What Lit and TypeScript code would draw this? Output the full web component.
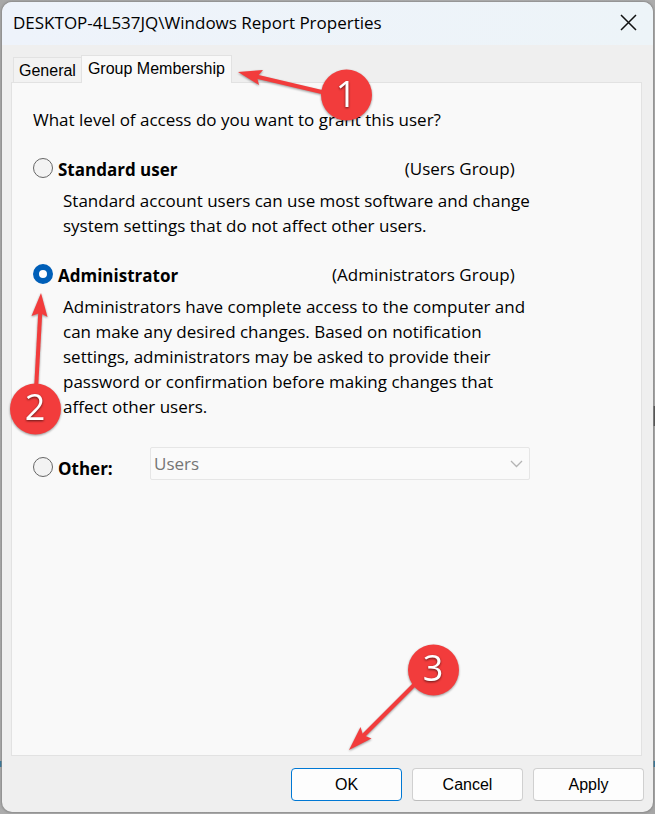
import { LitElement, html, css } from "lit";
import { customElement, state } from "lit/decorators.js";

@customElement("app-root")
class AppRoot extends LitElement {
  @state() private level = "administrator";

  static styles = css`
    :host {
      display: flex;
      box-sizing: border-box;
      min-height: 100vh;
      padding: 2px;
      background:
        linear-gradient(#1f6f9a, #1f6f9a) 0 761px / 100% 6px no-repeat,
        linear-gradient(#444, #444) 100% 406px / 2px 20px no-repeat,
        linear-gradient(100deg, #a8a8a8, #b4b4b4 60%, #a6a6a6);
      font-family: "Open Sans", "Noto Sans", sans-serif;
      font-size: 17px;
      line-height: 25px;
      color: #000;
    }
    .dialog {
      position: relative;
      flex: 1;
      display: flex;
      flex-direction: column;
      background: #efefef;
      border-radius: 10px;
      box-shadow: 0 0 2px 1px #8c8c8c;
    }
    .titlebar {
      display: flex;
      align-items: center;
      justify-content: space-between;
      height: 43px;
      padding: 0 16px 2px 11px;
      box-sizing: border-box;
      background: linear-gradient(90deg, #eef3fb, #edf4f8);
      border-radius: 10px 10px 0 0;
    }
    .title {
      margin: 0;
      font-size: 17px;
      font-weight: 400;
      white-space: nowrap;
    }
    .close {
      display: flex;
      padding: 0;
      border: 0;
      background: none;
    }
    .tabs {
      display: flex;
      align-items: flex-end;
      padding: 10px 11px 0;
    }
    .tab {
      box-sizing: border-box;
      height: 25px;
      padding: 0 5px;
      border: 1px solid #e2e2e2;
      border-bottom: 0;
      background: #f2f2f2;
      font: 16px/26px "Liberation Sans", Arial, sans-serif;
      color: #000;
    }
    .tab.active {
      position: relative;
      height: 28px;
      margin: 0 0 -1px -1px;
      padding: 0 6px 2px;
      background: #f9f9f9;
    }
    .panel {
      flex: 1;
      margin: 0 11px 0 9px;
      padding: 24px 21px;
      border: 1px solid #e2e2e2;
      background: #f9f9f9;
    }
    .options {
      width: min(100%, 493px);
      margin: 0;
      padding: 0;
      border: 0;
    }
    .question {
      padding: 0;
      margin-bottom: 24px;
      white-space: nowrap;
    }
    .option {
      margin-bottom: 24px;
    }
    .row {
      display: flex;
      align-items: center;
      padding-right: 15px;
    }
    .radio {
      appearance: none;
      flex: none;
      box-sizing: border-box;
      width: 20px;
      height: 20px;
      margin: 0 5px 2px 0;
      border: 1px solid #666;
      border-radius: 50%;
      background: #f3f3f3;
    }
    .radio:checked {
      border: 6px solid #005fb8;
      background: #fff;
    }
    .name {
      font-weight: 700;
      padding-top: 2px;
      line-height: 23px;
    }
    .group {
      margin-left: auto;
    }
    .description {
      margin: 7px 0 0 30px;
    }
    .line {
      display: block;
      white-space: nowrap;
    }
    .other {
      display: grid;
      grid-template-columns: 117px 1fr;
      align-items: center;
      margin-top: 28px;
    }
    .other .row {
      padding: 8px 0 0;
    }
    .picker {
      display: grid;
      align-items: center;
    }
    .select,
    .chevron {
      grid-area: 1 / 1;
    }
    .select {
      appearance: none;
      width: 100%;
      height: 33px;
      padding: 0 3px;
      border: 1px solid #e6e6e6;
      border-radius: 2px;
      background: #fafafa;
      font: inherit;
      color: #757575;
      opacity: 1;
    }
    .chevron {
      justify-self: end;
      margin-right: 7px;
      pointer-events: none;
    }
    .actions {
      display: flex;
      justify-content: flex-end;
      gap: 10px;
      padding: 12px 9px 11px;
    }
    .button {
      box-sizing: border-box;
      width: 111px;
      height: 33px;
      padding: 0;
      border: 1px solid #d0d0d0;
      border-bottom-color: #bcbcbc;
      border-radius: 4px;
      background: #fdfdfd;
      font: 16px/24px "Liberation Sans", Arial, sans-serif;
      color: #000;
    }
    .button.primary {
      border-color: #0078d4;
    }
    .callout {
      position: absolute;
      pointer-events: none;
      filter: drop-shadow(0 1px 1px rgba(0, 0, 0, 0.4));
      fill: #f23c3c;
    }
    .shaft {
      stroke: #f23c3c;
      stroke-width: 4;
    }
    .digit {
      font: 500 36px "Open Sans", sans-serif;
      text-anchor: middle;
      fill: #fff;
      filter: drop-shadow(0 1px 1px rgba(0, 0, 0, 0.6));
    }
    .first {
      left: 234px;
      top: 64px;
    }
    .second {
      left: 6px;
      top: 288px;
    }
    .third {
      right: 190px;
      bottom: 58px;
    }
  `;

  private radio(id: string) {
    return html`<input
      class="radio"
      type="radio"
      name="level"
      id=${id}
      .checked=${this.level === id}
      @change=${() => (this.level = id)}
    />`;
  }

  private option(id: string, name: string, group: string, lines: string[]) {
    return html`<div class="option">
      <div class="row">
        ${this.radio(id)}
        <label class="name" for=${id}>${name}</label>
        <span class="group">${group}</span>
      </div>
      <p class="description">
        ${lines.map((line) => html`<span class="line">${line} </span>`)}
      </p>
    </div>`;
  }

  render() {
    return html`<main class="dialog">
      <header class="titlebar">
        <h1 class="title">DESKTOP-4L537JQ\\Windows Report Properties</h1>
        <button class="close" aria-label="Close">
          <svg width="17" height="17" viewBox="0 0 17 17">
            <path d="M1 1L16 16M16 1L1 16" stroke="#111" stroke-width="1.5" />
          </svg>
        </button>
      </header>
      <div class="tabs" role="tablist">
        <button class="tab" role="tab" aria-selected="false">General</button>
        <button class="tab active" role="tab" aria-selected="true">Group Membership</button>
      </div>
      <section class="panel" role="tabpanel">
        <fieldset class="options">
          <legend class="question">What level of access do you want to grant this user?</legend>
          ${this.option("standard", "Standard user", "(Users Group)", [
            "Standard account users can use most software and change",
            "system settings that do not affect other users.",
          ])}
          ${this.option("administrator", "Administrator", "(Administrators Group)", [
            "Administrators have complete access to the computer and",
            "can make any desired changes. Based on notification",
            "settings, administrators may be asked to provide their",
            "password or confirmation before making changes that",
            "affect other users.",
          ])}
          <div class="other">
            <div class="row">
              ${this.radio("other")}
              <label class="name" for="other">Other:</label>
            </div>
            <div class="picker">
              <select class="select" aria-label="Other group" ?disabled=${this.level !== "other"}>
                <option>Users</option>
              </select>
              <svg class="chevron" width="13" height="8" viewBox="0 0 13 8">
                <path d="M1 1L6.5 6.5L12 1" fill="none" stroke="#b4b4b4" stroke-width="1.3" />
              </svg>
            </div>
          </div>
        </fieldset>
      </section>
      <footer class="actions">
        <button class="button primary">OK</button>
        <button class="button">Cancel</button>
        <button class="button">Apply</button>
      </footer>

      <svg class="callout first" width="140" height="60" viewBox="0 0 140 60">
        <path class="shaft" d="M18 10L90 27" />
        <path d="M2 6L27 4L21 11L23 19Z" />
        <circle cx="110.500" cy="29" r="25.500" />
        <text class="digit" x="110" y="41">1</text>
      </svg>
      <svg class="callout second" width="60" height="148" viewBox="0 0 60 148">
        <path class="shaft" d="M32.500 18L28 100" />
        <path d="M33 3L39.500 27L32 23L23.500 26Z" />
        <circle cx="27.500" cy="119" r="25.500" />
        <text class="digit" x="27" y="130">2</text>
      </svg>
      <svg class="callout third" width="118" height="112" viewBox="0 0 118 112">
        <path class="shaft" d="M18 94L70 42" />
        <path d="M4 108L15.500 85L18 93L26.500 96.500Z" />
        <circle cx="88.500" cy="28" r="25.500" />
        <text class="digit" x="88" y="39">3</text>
      </svg>
    </main>`;
  }
}
